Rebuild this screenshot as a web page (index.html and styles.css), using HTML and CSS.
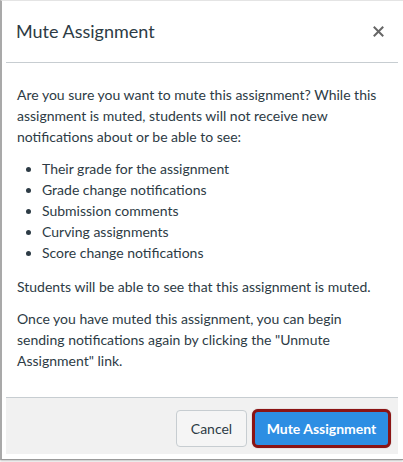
FILE: index.html
```html
<!DOCTYPE html>
<html>
<head>
<meta charset="utf-8">
<link rel="stylesheet" href="styles.css">
</head>
<body>
<div class="frame">
  <div class="dialog">
    <div class="header">
      <h1 class="title">Mute Assignment</h1>
      <span class="close" aria-label="Close">
        <svg width="11" height="11" viewBox="0 0 11 11"><path d="M1.5 1.5 L9.5 9.5 M9.5 1.5 L1.5 9.5" stroke="#666" stroke-width="2" stroke-linecap="square"/></svg>
      </span>
    </div>
    <div class="body">
      <p>Are you sure you want to mute this assignment? While this assignment is muted, students will not receive new notifications about or be able to see:</p>
      <ul class="list">
        <li>Their grade for the assignment</li>
        <li>Grade change notifications</li>
        <li>Submission comments</li>
        <li>Curving assignments</li>
        <li>Score change notifications</li>
      </ul>
      <p>Students will be able to see that this assignment is muted.</p>
      <p class="last">Once you have muted this assignment, you can begin sending notifications again by clicking the "Unmute Assignment" link.</p>
    </div>
    <div class="footer">
      <button class="btn btn-cancel">Cancel</button>
      <button class="btn btn-primary">Mute Assignment</button>
    </div>
  </div>
</div>
</body>
</html>
```
FILE: styles.css
```css
* { box-sizing: border-box; }
html, body { margin: 0; padding: 0; background: #fff; }
body {
  font-family: Lato, "Open Sans", sans-serif;
  color: #2d3b45;
  width: 403px;
  height: 462px;
  overflow: hidden;
}
.frame {
  width: 403px;
  height: 460px;
  border-left: 2px solid #a9a9a9;
  border-top: 1px solid #e4e4e4;
  border-bottom: 1px solid #9a9a9a;
  box-shadow: 0 1px 2px rgba(0,0,0,0.25);
  padding: 0 5px 5px 4px;
}
.dialog {
  display: flex;
  flex-direction: column;
  height: 100%;
}
.header {
  height: 62px;
  border-bottom: 1px solid #c7cdd1;
  display: flex;
  align-items: center;
  justify-content: space-between;
  padding: 0 14px 0 10px;
}
.title {
  margin: 0;
  font-size: 18px;
  font-weight: 400;
  color: #2d3b45;
  line-height: 1;
  padding-bottom: 1px;
}
.close { display: flex; width: 11px; height: 11px; }
.body {
  flex: 1;
  padding: 21px 10px 0 11px;
  font-size: 14px;
  line-height: 21px;
}
.body p { margin: 0 0 11px; }
.body p.last { margin: 0; }
.list {
  margin: 0 0 13px;
  padding: 0 0 0 25px;
}
.footer {
  border-top: 1px solid #c7cdd1;
  background: #f1f1f1;
  height: 57px;
  display: flex;
  justify-content: flex-end;
  align-items: flex-start;
  gap: 5px;
  padding: 11px 7px 0 0;
}
.btn {
  font-family: Lato, "Open Sans", sans-serif;
  font-size: 14px;
  border-radius: 4px;
  cursor: pointer;
}
.btn-cancel {
  margin-top: 1px;
  width: 71px;
  height: 37px;
  background: #f5f5f5;
  border: 1px solid #c7cdd1;
  color: #2d3b45;
  padding: 0;
}
.btn-primary {
  width: 139px;
  height: 39px;
  background: #2d8ee3;
  border: 3px solid #8b1414;
  border-radius: 6px;
  color: #fff;
  font-weight: 700;
  padding: 0;
  box-shadow: 0 0 1px rgba(80,0,0,0.6);
}
```
